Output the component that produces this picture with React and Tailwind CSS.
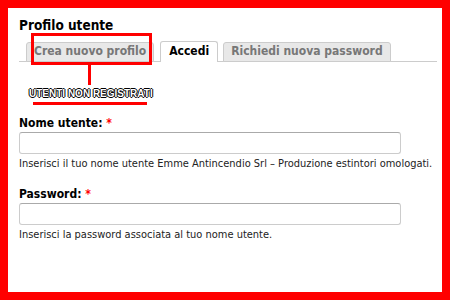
export default function App() {
  const tabs = [
    { label: "Crea nuovo profilo", active: false },
    { label: "Accedi", active: true },
    { label: "Richiedi nuova password", active: false },
  ]

  const labelCls = "mb-[3px] block font-['DejaVu_Sans_Condensed','DejaVu_Sans',sans-serif] text-[12px] font-bold leading-[12px] text-black"
  const inputCls = "h-[22px] w-[382px] rounded-[3px] border border-[#cccccc] border-t-[#aaaaaa]"
  const helpCls = "mt-[4px] text-[9.9px] leading-[12px] text-[#222]"

  return (
    <div className="w-[450px] h-[300px] bg-[#ff0000] p-2">
      <div className="relative h-full bg-white pl-[11px] pr-[5px] pt-[9px] font-['DejaVu_Sans',sans-serif] text-[#222]">
        <h2 className="font-['DejaVu_Sans_Condensed','DejaVu_Sans',sans-serif] text-[13.5px] font-bold leading-[17px] text-black">Profilo utente</h2>

        {/* tabs */}
        <div className="mt-[7px] flex items-end border-b border-[#cccccc] pl-[7px]">
          {tabs.map((tab, i) => (
            <div
              key={i}
              className={
                tab.active
                  ? "mr-[5px] -mb-px h-[21px] rounded-t-[3px] border border-b-0 border-[#cccccc] bg-white px-[8px] font-['DejaVu_Sans_Condensed','DejaVu_Sans',sans-serif] text-[12px] font-bold leading-[19px] text-black"
                  : "mr-[6px] -mb-px h-[20px] rounded-t-[3px] border border-[#cccccc] bg-[#e8e8e8] px-[7px] font-['DejaVu_Sans_Condensed','DejaVu_Sans',sans-serif] text-[12px] font-bold leading-[17px] text-[#777777]"
              }
            >
              {tab.label}
            </div>
          ))}
        </div>

        {/* form */}
        <div className="mt-[55px] flex flex-col">
          <label className={labelCls}>
            Nome utente: <span className="text-[#ff0000]">*</span>
          </label>
          <div className={inputCls}></div>
          <p className={helpCls}>
            Inserisci il tuo nome utente Emme Antincendio Srl – Produzione estintori omologati.
          </p>

          <label className={labelCls + " mt-[18px]"}>
            Password: <span className="text-[#ff0000]">*</span>
          </label>
          <div className={inputCls}></div>
          <p className={helpCls}>
            Inserisci la password associata al tuo nome utente.
          </p>
        </div>

        {/* annotation overlay */}
        <div className="absolute left-[21px] top-[25px] flex flex-col items-start">
          <div className="ml-[2px] h-[32px] w-[121px] border-[3px] border-[#ff0000]"></div>
          <div className="ml-[59px] h-[20px] w-[3px] bg-[#ff0000]"></div>
          <div className="mt-[3px] font-['Liberation_Sans',sans-serif] text-[10px] font-bold leading-[12px] text-white [text-shadow:1px_0_0_#000,-1px_0_0_#000,0_1px_0_#000,0_-1px_0_#000]">
            UTENTI NON REGISTRATI
          </div>
          <div className="ml-[4px] mt-[2px] h-[3px] w-[114px] bg-[#ff0000]"></div>
        </div>
      </div>
    </div>
  )
}
